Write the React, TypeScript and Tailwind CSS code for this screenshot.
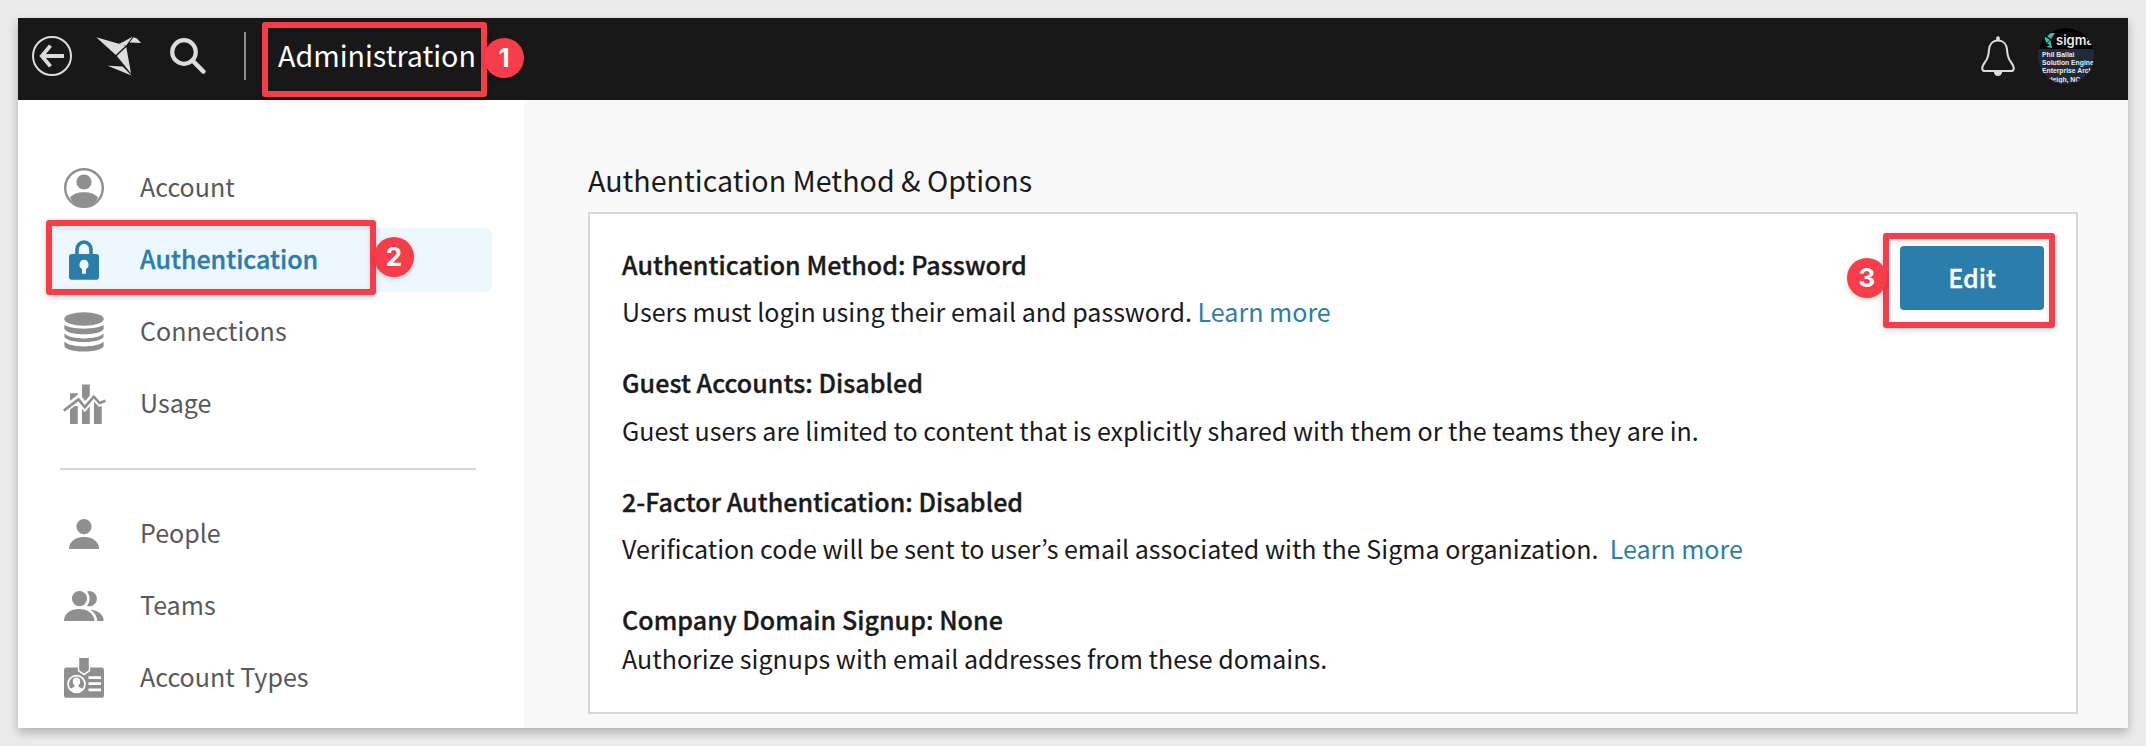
import type { ReactNode } from "react";

function BackIcon() {
  return (
    <svg className="size-10" viewBox="0 0 40 40" fill="none" stroke="#dcdcdc">
      <circle cx="20" cy="20" r="19" strokeWidth="2" />
      <path d="M32 20H9.5M18.5 9.6 9.8 20l8.7 10.4" strokeWidth="3.8" />
    </svg>
  );
}

function BirdLogo() {
  return (
    <svg className="h-10 w-[46px]" viewBox="96 36 46 40" fill="#dcdcdc">
      <path d="M96.3 37.2 125.6 45.8 115.8 55Z" />
      <path d="M118 44.3 123.4 41.7 132.4 36.8 126.2 45.6Z" />
      <path d="M133.5 37.2 137 38.4 141 42.9 129.4 42.6Z" />
      <path d="M116.8 56 126.3 46.9 131 73.6Z" />
      <path d="M107.7 65.8 122.6 66.4 131.5 75.4Z" />
    </svg>
  );
}

function SearchIcon() {
  return (
    <svg className="h-9 w-9" viewBox="0 0 36 36" fill="none" stroke="#dcdcdc">
      <circle cx="14" cy="14" r="11.8" strokeWidth="4.2" />
      <path d="M22.5 22.5 33.3 33.500" strokeWidth="4.6" strokeLinecap="round" />
    </svg>
  );
}

function BellIcon() {
  return (
    <svg className="h-10 w-[34px]" viewBox="0 0 34 40" fill="none">
      <path
        d="M17 4.6c-5.4 0-8.6 4-9 9-.4 5.600-1.200 8-2.600 10.400C3.800 26.600 1.200 29.400 1.200 32.400c0 1.900 1.300 2.700 3.200 2.700h25.200c1.900 0 3.200-.8 3.200-2.700 0-3-2.600-5.800-4.200-8.400C27.200 21.600 26.400 19.200 26 13.600c-.4-5-3.600-9-9-9Z"
        stroke="#dcdcdc"
        strokeWidth="2"
      />
      <path d="M15.200 5V2a1.800 1.800 0 0 1 3.600 0v3ZM12.800 35.500h8.400c0 2.400-1.800 4.500-4.200 4.500s-4.200-2.100-4.200-4.500Z" fill="#dcdcdc" />
    </svg>
  );
}

function Avatar() {
  return (
    <div className="flex size-14 flex-col overflow-hidden rounded-full bg-[#1f2b38] font-['Liberation_Sans',sans-serif] font-bold text-[#e8ecef]">
      <div className="flex h-[21px] shrink-0 items-center bg-black pl-[5px]">
        <svg className="mt-1 h-[15px] w-3 shrink-0" viewBox="0 0 12 15" fill="#2dc5b0">
          <path d="M0 2 7 7 3.500 10ZM4 3 8 0h4L8 6ZM7.500 7 9 15 3.500 14 7 12 4 10.500Z" />
        </svg>
        <span className="mt-0.5 ml-[1px] font-[Inter,sans-serif] text-[13px] leading-[20px] font-semibold">sigma</span>
      </div>
      <div className="pt-0.5 pl-1 text-[6.800px] leading-[8.200px] whitespace-nowrap">
        <div>Phil Ballai</div>
        <div>Solution Engineer</div>
        <div>Enterprise Arch</div>
        <div>Raleigh, NC</div>
      </div>
    </div>
  );
}

function AccountIcon() {
  return (
    <svg className="size-10" viewBox="0 0 40 40" fill="#8f8f8f">
      <circle cx="20" cy="20" r="18.800" fill="none" stroke="#8f8f8f" strokeWidth="2.400" />
      <circle cx="20" cy="14" r="7.600" />
      <path d="M6 29.600C9 26 14 24.300 20 24.300s11 1.700 14 5.300C31 36 25.500 39 20 39S9 36 6 29.600Z" />
    </svg>
  );
}

function LockIcon() {
  return (
    <svg className="h-10 w-[30px]" viewBox="0 0 30 40">
      <path d="M8 15V9.500a7 7.500 0 0 1 14 0V15" fill="none" stroke="#2b7dab" strokeWidth="3.600" />
      <rect y="14" width="30" height="25.700" rx="2.600" fill="#2b7dab" />
      <path d="M15 19.800a4.900 4.900 0 0 0-2 9.200v4.700h4V29a4.900 4.900 0 0 0-2-9.200Z" fill="#edf7fe" />
    </svg>
  );
}

function DatabaseIcon() {
  return (
    <svg className="size-10" viewBox="0 0 40 40" fill="#8f8f8f">
      <ellipse cx="20" cy="7" rx="19.800" ry="6.800" />
      <path d="M.4 12.600C5 18 35 18 39.600 12.600v4.400c-3 7-36.200 7-39.200 0Z" />
      <path d="M.4 21.600C5 28 35 28 39.600 21.600v3.200c-3 7-36.200 7-39.200 0Z" />
      <path d="M.4 29.600C5 36 35 36 39.600 29.600v4.600c-3 7-36.200 7-39.200 0Z" />
    </svg>
  );
}

function UsageIcon() {
  return (
    <svg className="h-10 w-[43px]" viewBox="0 0 43 40">
      <path d="M7 22h7.800v18H7ZM19 20h7.800v20H19ZM31 16h3l4.800 6v18H31Z" fill="#8f8f8f" />
      <path d="M1 25.800 15.500 14.800 21.800 22.800 30.800 12 37 18.800 42.500 16.500" fill="none" stroke="#fff" strokeWidth="7" />
      <path d="M7 9.200h7.800v1.600L7 16.700ZM19 .5h7.800v11.200L22.200 17 19 13Z" fill="#8f8f8f" />
      <path d="M.8 26.600 15.500 15.400 21.800 23.200 30.800 12.600 36.600 19 42.500 16.800" fill="none" stroke="#8f8f8f" strokeWidth="2.600" />
    </svg>
  );
}

function PersonIcon() {
  return (
    <svg className="h-[30px] w-[30px]" viewBox="0 0 30 30" fill="#8f8f8f">
      <circle cx="15" cy="7.600" r="7.600" />
      <path d="M0 30c0-7.500 6.500-12 15-12s15 4.500 15 12Z" />
    </svg>
  );
}

function TeamIcon() {
  return (
    <svg className="h-[30px] w-10" viewBox="0 0 40 30" fill="#8f8f8f">
      <circle cx="15.500" cy="7.600" r="7.600" />
      <path d="M0 30c0-7.500 6.500-12 15-12s15 4.500 15.500 12Z" />
      <path d="M23 .4a7.600 7.600 0 1 1 0 14.500c3.400-4.400 3.400-10.100 0-14.500ZM26 18.600c8 .8 13.500 5 13.700 11.400h-6.500c-.2-4.900-2.600-8.700-7.200-11.400Z" />
    </svg>
  );
}

function BadgeIcon() {
  return (
    <svg className="size-10" viewBox="0 0 40 40">
      <rect y="9.400" width="40" height="30.400" rx="2.600" fill="#8f8f8f" />
      <path d="M13.900 6h12.200v7.300L20 17.400l-6.100-4.100Z" fill="#fff" />
      <path d="M15.200 0h9.600v12.300L20 15.400l-4.800-3.100Z" fill="#8f8f8f" />
      <circle cx="12.500" cy="26" r="9.300" fill="#fff" />
      <circle cx="12.500" cy="26" r="7.600" fill="#8f8f8f" />
      <path d="M12.500 19.500c-2.300 0-3.700 1.600-3.700 3.900 0 1.500.6 3 1.600 3.900v1.500l-4 1.900a7.600 7.600 0 0 0 12.200 0l-4-1.900v-1.500c1-.9 1.600-2.400 1.600-3.900 0-2.300-1.400-3.900-3.700-3.900Z" fill="#fff" />
      <path d="M24.500 18.200H37v2.800H24.500ZM24.500 24.300H37v2.800H24.500ZM24.500 30.500H37v2.800H24.500Z" fill="#fff" />
    </svg>
  );
}

function Outline({ className }: { className: string }) {
  return (
    <div
      className={`pointer-events-none absolute rounded-[3px] border-6 border-[#f73d49] shadow-[0_2px_6px_rgba(0,0,0,0.18),inset_0_2px_5px_rgba(0,0,0,0.15)] ${className}`}
    />
  );
}

function Marker({ n, className }: { n: number; className: string }) {
  return (
    <div
      className={`absolute flex size-10 items-center justify-center rounded-full bg-[#f73d49] font-[Inter,sans-serif] text-[26px] leading-none font-bold text-white shadow-[0_2px_5px_rgba(0,0,0,0.18)] [-webkit-text-stroke:0] ${className}`}
    >
      {n}
    </div>
  );
}

function NavItem({ icon, label, active, children }: { icon: ReactNode; label: string; active?: boolean; children?: ReactNode }) {
  return (
    <li
      className={`relative flex h-16 items-center rounded-lg ${
        active ? "bg-[#edf7fe] font-medium text-[#2b7dab] [-webkit-text-stroke:0.35px]" : "text-[#585858]"
      }`}
    >
      <span className="ml-2 flex w-12 justify-center">{icon}</span>
      <span className="ml-8 pb-0.5">{label}</span>
      {children}
    </li>
  );
}

function Setting({ title, link, gap = "mt-[15px]", children }: { title: string; link?: string; gap?: string; children: ReactNode }) {
  return (
    <section>
      <h3 className="leading-8 font-medium tracking-[0.04px] [-webkit-text-stroke:0.35px]">{title}</h3>
      <p className={`leading-8 whitespace-pre ${gap}`}>
        {children}
        {link && (
          <a href="#" className="text-[#2b7dab]">
            {link}
          </a>
        )}
      </p>
    </section>
  );
}

export default function App() {
  return (
    <div className="h-[746px] w-[2146px] overflow-hidden bg-[#ebebeb] p-[18px] font-['Noto_Sans_CJK_KR',sans-serif] text-[25.060px] text-[#1a1a1a]">
      <div className="flex h-[710px] flex-col bg-white shadow-[0_5px_9px_rgba(0,0,0,0.2),0_2px_14px_rgba(0,0,0,0.06)]">
        <header className="flex h-[82px] shrink-0 items-center bg-[#181818] pr-[34px] pb-1.5 pl-[14px]">
          <BackIcon />
          <div className="ml-6">
            <BirdLogo />
          </div>
          <div className="ml-7">
            <SearchIcon />
          </div>
          <div className="ml-[38px] h-12 w-0.5 bg-[#8c8c8c]" />
          <div className="relative ml-8">
            <h1 className="pb-0.5 text-[28.640px] leading-10 text-white">Administration</h1>
            <Outline className="-top-[13px] -left-[16px] h-[75px] w-[225px]" />
            <Marker n={1} className="top-[3px] left-[206px]" />
          </div>
          <div className="ml-auto flex items-center gap-[23px]">
            <BellIcon />
            <Avatar />
          </div>
        </header>

        <div className="flex min-h-0 flex-1">
          <nav className="w-[506px] shrink-0 pt-14 pr-8 pl-[34px]">
            <ul className="flex flex-col gap-2">
              <NavItem icon={<AccountIcon />} label="Account" />
              <NavItem icon={<LockIcon />} label="Authentication" active>
                <Outline className="-top-2 -left-1.5 h-[75px] w-[330px]" />
                <Marker n={2} className="top-[9px] left-[322px]" />
              </NavItem>
              <NavItem icon={<DatabaseIcon />} label="Connections" />
              <NavItem icon={<UsageIcon />} label="Usage" />
            </ul>
            <div className="mt-8 mr-4 ml-2 h-0.5 bg-[#d9d9d9]" />
            <ul className="mt-8 flex flex-col gap-2">
              <NavItem icon={<PersonIcon />} label="People" />
              <NavItem icon={<TeamIcon />} label="Teams" />
              <NavItem icon={<BadgeIcon />} label="Account Types" />
            </ul>
          </nav>

          <main className="flex-1 bg-[#f8f8f8] pt-[60px] pr-[50px] pl-16">
            <h2 className="text-[28.640px] leading-10">Authentication Method &amp; Options</h2>
            <div className="mt-3 flex h-[502px] w-[1490px] items-start justify-between border-2 border-[#d9d9d9] bg-white px-8">
              <div className="flex flex-col gap-[39px] pt-[34px]">
                <Setting title="Authentication Method: Password" link="Learn more">
                  {"Users must login using their email and password. "}
                </Setting>
                <Setting title="Guest Accounts: Disabled" gap="mt-4">
                  Guest users are limited to content that is explicitly shared with them or the teams they are in.
                </Setting>
                <Setting title="2-Factor Authentication: Disabled" link="Learn more">
                  {"Verification code will be sent to user’s email associated with the Sigma organization.  "}
                </Setting>
                <Setting title="Company Domain Signup: None" gap="mt-[7px]">
                  Authorize signups with email addresses from these domains.
                </Setting>
              </div>
              <div className="relative mt-8">
                <button className="flex h-16 w-36 items-center justify-center rounded bg-[#2b7dab] font-medium text-white [-webkit-text-stroke:0.35px]">
                  Edit
                </button>
                <Outline className="-top-[13px] -left-[17px] h-[95px] w-[172px]" />
                <Marker n={3} className="top-3 -left-[53px]" />
              </div>
            </div>
          </main>
        </div>
      </div>
    </div>
  );
}
